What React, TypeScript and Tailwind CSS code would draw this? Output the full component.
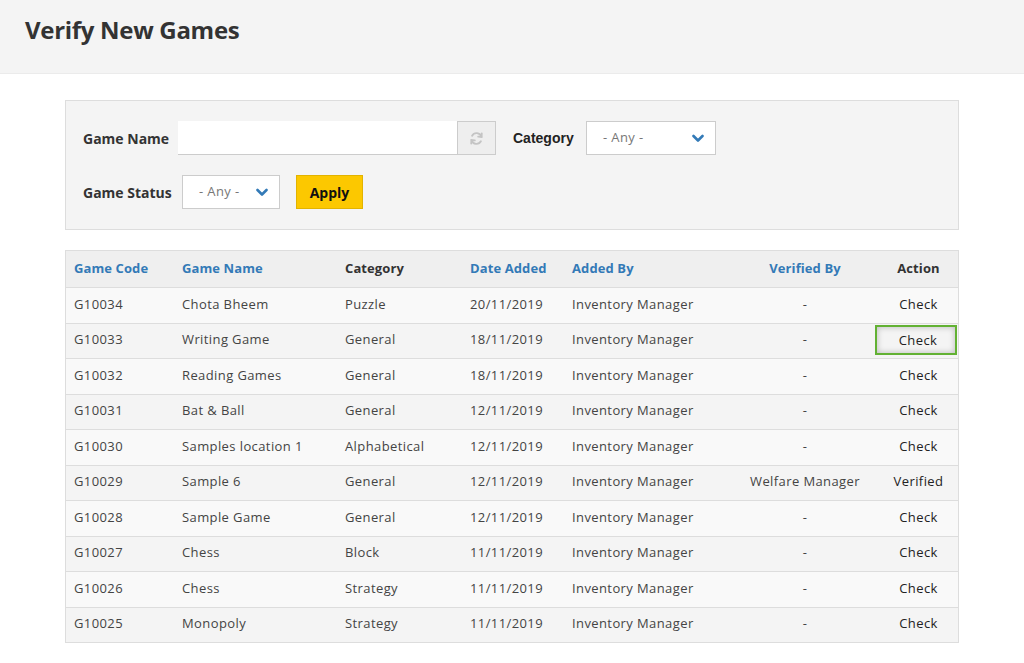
import React from 'react';

type Game = {
  code: string;
  name: string;
  category: string;
  date: string;
  addedBy: string;
  verifiedBy: string;
  action: string;
};

const games: Game[] = [
  { code: 'G10034', name: 'Chota Bheem', category: 'Puzzle', date: '20/11/2019', addedBy: 'Inventory Manager', verifiedBy: '-', action: 'Check' },
  { code: 'G10033', name: 'Writing Game', category: 'General', date: '18/11/2019', addedBy: 'Inventory Manager', verifiedBy: '-', action: 'Check' },
  { code: 'G10032', name: 'Reading Games', category: 'General', date: '18/11/2019', addedBy: 'Inventory Manager', verifiedBy: '-', action: 'Check' },
  { code: 'G10031', name: 'Bat & Ball', category: 'General', date: '12/11/2019', addedBy: 'Inventory Manager', verifiedBy: '-', action: 'Check' },
  { code: 'G10030', name: 'Samples location 1', category: 'Alphabetical', date: '12/11/2019', addedBy: 'Inventory Manager', verifiedBy: '-', action: 'Check' },
  { code: 'G10029', name: 'Sample 6', category: 'General', date: '12/11/2019', addedBy: 'Inventory Manager', verifiedBy: 'Welfare Manager', action: 'Verified' },
  { code: 'G10028', name: 'Sample Game', category: 'General', date: '12/11/2019', addedBy: 'Inventory Manager', verifiedBy: '-', action: 'Check' },
  { code: 'G10027', name: 'Chess', category: 'Block', date: '11/11/2019', addedBy: 'Inventory Manager', verifiedBy: '-', action: 'Check' },
  { code: 'G10026', name: 'Chess', category: 'Strategy', date: '11/11/2019', addedBy: 'Inventory Manager', verifiedBy: '-', action: 'Check' },
  { code: 'G10025', name: 'Monopoly', category: 'Strategy', date: '11/11/2019', addedBy: 'Inventory Manager', verifiedBy: '-', action: 'Check' },
];

const cols = 'grid grid-cols-[108px_163px_125px_102px_160px_150px_84px]';

const Chevron = () => (
  <svg width="12" height="9" viewBox="0 0 12 9" className="text-[#337ab7]">
    <path d="M1.5 2 L6 6.5 L10.5 2" fill="none" stroke="currentColor" strokeWidth="2.6" strokeLinecap="round" strokeLinejoin="round" />
  </svg>
);

const AnySelect: React.FC<{ width: string }> = ({ width }) => (
  <div className={`${width} h-[34px] bg-white border border-[#cccccc] flex items-center justify-between pl-[16px] pr-[11px] text-[13px] tracking-[0.4px] text-[#777]`}>
    <span>- Any -</span>
    <Chevron />
  </div>
);

const RefreshIcon = () => (
  <svg width="15" height="15" viewBox="0 0 16 16" fill="none" stroke="#c4c4c4" strokeWidth="2" strokeLinecap="round">
    <path d="M13.2 6.2 A5.4 5.4 0 0 0 3.3 5" />
    <path d="M13.6 2.6 L13.4 6.4 L9.8 6" />
    <path d="M2.8 9.8 A5.4 5.4 0 0 0 12.7 11" />
    <path d="M2.4 13.4 L2.6 9.6 L6.2 10" />
  </svg>
);

export default function App() {
  return (
    <div className="min-h-screen bg-white text-[#444] font-['Open_Sans',sans-serif]">
      <div className="h-[74px] bg-[#f4f4f4] border-b border-[#ebebeb] px-[25px] pt-[14px]">
        <h1 className="text-[24px] leading-[32px] font-bold text-[#333] tracking-[-0.3px]">Verify New Games</h1>
      </div>

      <div className="ml-[65px] w-[894px] pt-[26px]">
        <div className="bg-[#f4f4f4] border border-[#dddddd] pl-[17px] pt-[20px] pb-[20px]">
          <div className="flex items-center h-[34px]">
            <label className="text-[14px] font-bold text-[#333] w-[95px]">Game Name</label>
            <div className="w-[279px] h-[34px] bg-white border-b border-[#cccccc]" />
            <div className="w-[39px] h-[34px] bg-[#eeeeee] border border-[#cccccc] flex items-center justify-center">
              <RefreshIcon />
            </div>
            <label className="ml-[17px] w-[73px] text-[14px] font-bold text-[#222] font-['Liberation_Sans',Arial,sans-serif]">Category</label>
            <AnySelect width="w-[130px]" />
          </div>
          <div className="flex items-center h-[34px] mt-[20px]">
            <label className="text-[14px] font-bold text-[#333] w-[99px]">Game Status</label>
            <AnySelect width="w-[98px]" />
            <button className="ml-[16px] w-[67px] h-[34px] bg-[#fcc800] border border-[#e2b300] text-[14px] font-bold text-[#111]">Apply</button>
          </div>
        </div>

        <div className="mt-[20px] border border-[#dddddd] text-[13px] tracking-[0.4px]">
          <div className={`${cols} h-[36px] bg-[#efefef] items-center font-bold tracking-[0.1px]`}>
            <div className="pl-[8px] text-[#337ab7]">Game Code</div>
            <div className="pl-[8px] text-[#337ab7]">Game Name</div>
            <div className="pl-[8px] text-[#333]">Category</div>
            <div className="pl-[8px] text-[#337ab7]">Date Added</div>
            <div className="pl-[8px] text-[#337ab7]">Added By</div>
            <div className="text-center pl-[12px] text-[#337ab7]">Verified By</div>
            <div className="text-center pl-[5px] text-[#333]">Action</div>
          </div>
          {games.map((g, i) => (
            <div
              key={g.code}
              className={`${cols} h-[35.5px] items-center pb-[2px] border-t border-[#dddddd] ${i % 2 === 0 ? 'bg-[#f9f9f9]' : 'bg-[#f4f4f4]'}`}
            >
              <div className="pl-[8px]">{g.code}</div>
              <div className="pl-[8px]">{g.name}</div>
              <div className="pl-[8px]">{g.category}</div>
              <div className="pl-[8px]">{g.date}</div>
              <div className="pl-[8px]">{g.addedBy}</div>
              <div className="text-center pl-[12px]">{g.verifiedBy}</div>
              <div className="flex justify-center text-[#222]">
                {i === 1 ? (
                  <span className="w-[82px] h-[30px] mt-[1px] pl-[4px] flex items-center justify-center border-2 border-[#62b133] shadow-[inset_0_0_6px_rgba(0,0,0,0.25)] bg-[#f4f4f4]">
                    {g.action}
                  </span>
                ) : (
                  <span className="pl-[5px]">{g.action}</span>
                )}
              </div>
            </div>
          ))}
        </div>
      </div>
    </div>
  );
}
